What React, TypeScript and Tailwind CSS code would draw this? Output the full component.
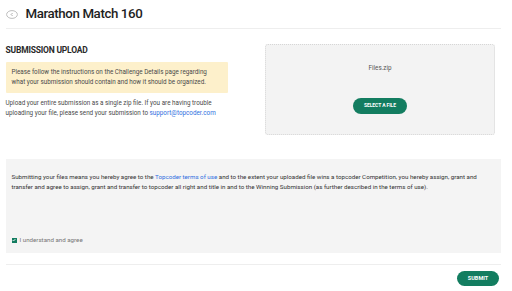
const App = () => {
  return (
    <div className="w-[512px] h-[291px] bg-white pl-[5.5px] pr-[11px] text-[#2a2a2a] font-['Roboto',sans-serif] overflow-hidden">
      <header className="h-[29px] flex items-center gap-x-2 border-b border-[#eeeeee]">
        <svg width="12" height="9" viewBox="0 0 12 9" className="mt-[1px]">
          <ellipse cx="6" cy="4.5" rx="5.4" ry="3.9" fill="none" stroke="#b7b7b7" strokeWidth="0.9" />
          <path d="M6.6 3 L5.1 4.5 L6.6 6" fill="none" stroke="#9a9a9a" strokeWidth="0.8" />
        </svg>
        <h1 className="text-[13.3px] font-medium tracking-[-0.4px] text-[#1e1e1e]">Marathon Match 160</h1>
      </header>

      <section className="flex justify-between pt-[16px]">
        <div className="w-[222px]">
          <h2 className="text-[8.5px] font-bold uppercase leading-[10px] tracking-[-0.2px]">Submission Upload</h2>
          <div className="mt-[7px] bg-[#fdf0cb] rounded-[1px] px-[6px] pt-[5px] pb-[6px] text-[6.3px] leading-[10px] text-[#4a4a4a]">
            Please follow the instructions on the Challenge Details page regarding what your submission should
            contain and how it should be organized.
          </div>
          <p className="mt-[5px] text-[6.3px] leading-[10px] text-[#4a4a4a]">
            Upload your entire submission as a single zip file. If you are having trouble uploading your file, please
            send your submission to <span className="text-[#2f6fe0]">support@topcoder.com</span>
          </p>
        </div>
        <div className="w-[230px] h-[91px] mr-[6px] -mt-[1px] bg-[#f3f3f3] border border-dotted border-[#d6d6d6] rounded-[3px] flex flex-col items-center">
          <span className="mt-[19px] text-[6.3px] leading-[8px] text-[#555]">Files.zip</span>
          <button className="mt-[26px] w-[54px] h-[16px] rounded-full bg-[#137d60] text-white text-[5px] font-bold uppercase tracking-[-0.1px]">
            Select a file
          </button>
        </div>
      </section>

      <section className="mt-[24px] h-[94px] bg-[#f4f4f4] px-[6px] pt-[13px] flex flex-col justify-between pb-[8px]">
        <p className="text-[6.2px] leading-[10px] text-[#333]">
          Submitting your files means you hereby agree to the{" "}
          <span className="text-[#2f6fe0]">Topcoder terms of use</span> and to the extent your uploaded file wins a
          topcoder Competition, you hereby assign, grant and transfer and agree to assign, grant and transfer to
          topcoder all right and title in and to the Winning Submission (as further described in the terms of use).
        </p>
        <label className="flex items-center gap-x-[3px] text-[6.2px] text-[#777]">
          <span className="w-[5px] h-[5px] bg-[#137d60] flex items-center justify-center">
            <svg width="4" height="4" viewBox="0 0 4 4">
              <path d="M0.6 2 L1.6 3 L3.4 1" fill="none" stroke="white" strokeWidth="0.8" />
            </svg>
          </span>
          I understand and agree
        </label>
      </section>

      <div className="mt-[11px] border-t border-[#eeeeee] pt-[6px] flex justify-end">
        <button className="w-[42px] h-[15px] rounded-full bg-[#137d60] text-white text-[5.5px] font-bold uppercase mr-[2px]">
          Submit
        </button>
      </div>
    </div>
  );
};

export default App;
